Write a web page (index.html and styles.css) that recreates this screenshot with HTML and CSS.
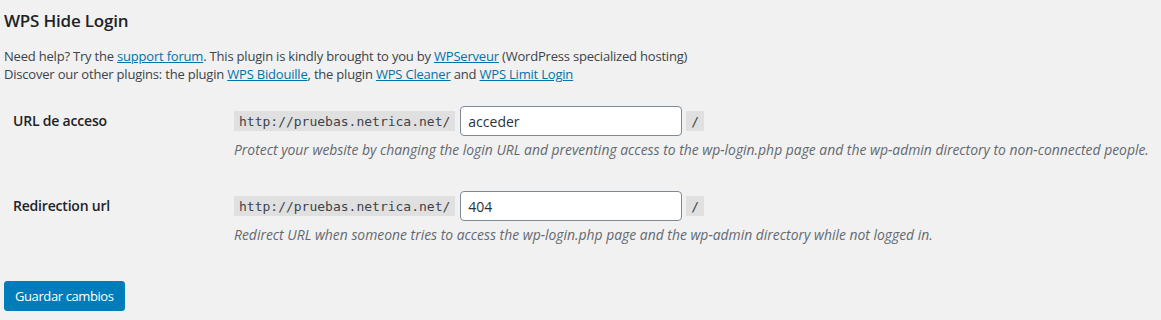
FILE: index.html
```html
<!DOCTYPE html>
<html lang="en">
<head>
    <meta charset="UTF-8">
    <meta name="viewport" content="width=device-width, initial-scale=1.0">
    <title>WPS Hide Login</title>
    <link rel="stylesheet" href="styles.css">
</head>
<body>
    <div class="wrap">
        <h2 class="title">WPS Hide Login</h2>
        <p class="intro">
            Need help? Try the <a href="#">support forum</a>. This plugin is kindly brought to you by <a href="#">WPServeur</a> (WordPress specialized hosting)<br>
            Discover our other plugins: the plugin <a href="#">WPS Bidouille</a>, the plugin <a href="#">WPS Cleaner</a> and <a href="#">WPS Limit Login</a>
        </p>

        <form class="settings">
            <div class="form-row">
                <label class="row-label" for="whl_page">URL de acceso</label>
                <div class="row-field">
                    <div class="url-line">
                        <code>http://pruebas.netrica.net/</code>
                        <input type="text" id="whl_page" value="acceder">
                        <code>/</code>
                    </div>
                    <p class="description">Protect your website by changing the login URL and preventing access to the wp-login.php page and the wp-admin directory to non-connected people.</p>
                </div>
            </div>

            <div class="form-row">
                <label class="row-label" for="whl_redirect">Redirection url</label>
                <div class="row-field">
                    <div class="url-line">
                        <code>http://pruebas.netrica.net/</code>
                        <input type="text" id="whl_redirect" value="404">
                        <code>/</code>
                    </div>
                    <p class="description">Redirect URL when someone tries to access the wp-login.php page and the wp-admin directory while not logged in.</p>
                </div>
            </div>

            <div class="submit">
                <button type="button" class="button-primary">Guardar cambios</button>
            </div>
        </form>
    </div>
</body>
</html>
```

FILE: styles.css
```css
:root {
    --bg-color: #f1f1f1;
    --text-color: #3c434a;
    --link-color: #0073aa;
    --muted-color: #646970;
    --primary-color: #007cba;
}

* {
    margin: 0;
    padding: 0;
    box-sizing: border-box;
}

body {
    background-color: var(--bg-color);
    color: var(--text-color);
    font-family: 'Open Sans', 'Noto Sans', sans-serif;
    font-size: 13px;
    line-height: 1.4;
    letter-spacing: -0.2px;
}

.wrap {
    padding: 0 4px;
}

.title {
    font-size: 17px;
    font-weight: 600;
    color: #1d2327;
    padding-top: 10px;
    line-height: 22px;
}

.intro {
    margin-top: 15px;
    line-height: 18px;
}

.intro a {
    color: var(--link-color);
    text-decoration: underline;
}

.settings {
    margin-top: 7px;
}

.form-row {
    display: flex;
    padding: 16px 0 16px 9px;
}

.row-label {
    width: 221px;
    flex-shrink: 0;
    font-size: 14px;
    font-weight: 600;
    color: #1d2327;
    line-height: 30px;
}

.url-line {
    display: flex;
    align-items: center;
    gap: 5px;
}

code {
    font-family: 'DejaVu Sans Mono', monospace;
    font-size: 13px;
    line-height: 15px;
    letter-spacing: 0;
    padding: 3px 5px 2px;
    background-color: rgba(0, 0, 0, 0.07);
    color: #3c434a;
}

input[type="text"] {
    width: 222px;
    height: 30px;
    padding: 0 7px;
    border: 1px solid #7e8993;
    border-radius: 4px;
    background-color: #fff;
    color: #2c3338;
    font-family: inherit;
    font-size: 14px;
    margin-right: -1px;
}

.description {
    margin-top: 5px;
    font-size: 13.9px;
    font-style: italic;
    color: var(--muted-color);
    line-height: 18px;
    letter-spacing: 0;
}

.submit {
    margin-top: 21px;
}

.button-primary {
    height: 30px;
    padding: 0 10px;
    border: 1px solid var(--primary-color);
    border-radius: 3px;
    background-color: var(--primary-color);
    color: #fff;
    font-family: inherit;
    font-size: 13px;
    letter-spacing: -0.4px;
    cursor: pointer;
}
```
